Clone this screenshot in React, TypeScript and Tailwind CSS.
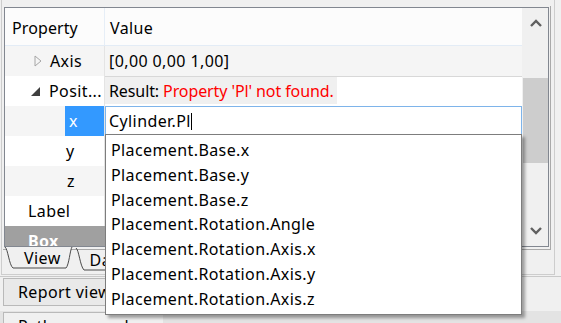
import React from "react";

const rowBg = ["bg-[#f5f5f5]", "bg-white"];

function Chevron({ up }: { up?: boolean }) {
  return (
    <svg width="12" height="8" viewBox="0 0 12 8" className="block">
      <polyline
        points={up ? "1,7 6,2 11,7" : "1,1 6,6 11,1"}
        fill="none"
        stroke="#606060"
        strokeWidth="2.4"
      />
    </svg>
  );
}

function Row({
  bg,
  label,
  indent,
  children,
}: {
  bg: string;
  label: React.ReactNode;
  indent: number;
  children?: React.ReactNode;
}) {
  return (
    <div className={`flex h-[30px] shrink-0 ${bg}`}>
      <div className="flex w-[100px] shrink-0 border-r border-[#e4e4e4]" style={{ paddingLeft: indent }}>
        <div className="flex flex-1 items-center whitespace-nowrap">{label}</div>
      </div>
      <div className="flex min-w-0 flex-1 items-center">{children}</div>
    </div>
  );
}

const completions = [
  "Placement.Base.x",
  "Placement.Base.y",
  "Placement.Base.z",
  "Placement.Rotation.Angle",
  "Placement.Rotation.Axis.x",
  "Placement.Rotation.Axis.y",
  "Placement.Rotation.Axis.z",
];

export default function App() {
  return (
    <div className="relative h-[323px] w-[561px] overflow-hidden bg-[#f0f0f0] font-['Noto_Sans',sans-serif] text-[16px] tracking-[0.4px] text-black">
      {/* property dock */}
      <div className="ml-px h-[275px] w-[554px] border-x border-b border-[#cdcdcd] pl-px pt-[6px]">
        <div className="h-[244px] w-[548px] border-r border-b border-[#a9a9a9] pl-px pt-px">
          <div className="flex h-[240px] w-[545px] border border-[#828790] bg-white">
            {/* table */}
            <div className="flex w-[517px] flex-col overflow-hidden">
              <div className="flex h-[38px] shrink-0 border-b border-[#e3ecf6] bg-[#fcfcfc]">
                <div className="flex w-[100px] items-center border-r border-[#e6eef7] pl-[7px] pt-[3px] tracking-[0.1px]">Property</div>
                <div className="flex items-center pl-[5px] pt-[3px]">Value</div>
              </div>

              <Row
                bg={rowBg[0]}
                indent={29}
                label={
                  <>
                    <svg width="8" height="12" viewBox="0 0 8 12" className="mr-[8px]">
                      <polygon points="1,1 7,6 1,11" fill="none" stroke="#a6a6a6" strokeWidth="1" />
                    </svg>
                    Axis
                  </>
                }
              >
                <span className="pl-[4px]">[0,00 0,00 1,00]</span>
              </Row>

              <Row
                bg={rowBg[1]}
                indent={26}
                label={
                  <>
                    <svg width="10" height="10" viewBox="0 0 10 10" className="mr-[8px] mt-[1px]">
                      <polygon points="9,0 9,9 0,9" fill="#3f3f3f" />
                    </svg>
                    Posit...
                  </>
                }
              >
                <div className="h-full w-full border-t border-[#d8d8d8] pb-[2px]">
                  <div className="flex h-full w-fit items-center whitespace-nowrap bg-[#f0f0f0] pl-[4px] pr-[3px] tracking-[-0.1px]">
                    Result:&nbsp;<span className="text-[#ff0000]">Property 'Pl' not found.</span>
                  </div>
                </div>
              </Row>

              <Row
                bg={rowBg[0]}
                indent={60}
                label={<div className="flex h-full w-full items-center bg-[#3399ff] pl-[4px] text-white">x</div>}
              >
                <div className="flex h-full w-full items-center border border-[#7eb4ea] bg-white pl-[3px]">
                  Cylinder.Pl
                  <span className="inline-block h-[17px] w-px bg-black" />
                </div>
              </Row>

              <Row bg={rowBg[1]} indent={61} label="y" />
              <Row bg={rowBg[0]} indent={62} label="z" />
              <Row bg={rowBg[1]} indent={23} label="Label" />
              <div className="flex h-[30px] shrink-0 items-start bg-[#a0a0a0] pl-[23px] pt-[3px] font-bold text-white">
                Box
              </div>
            </div>

            {/* scrollbar */}
            <div className="flex w-[26px] flex-col bg-[#f0f0f0] pl-px">
              <div className="flex h-[38px] shrink-0 items-center justify-center pb-[8px]">
                <Chevron up />
              </div>
              <div className="mt-[32px] h-[85px] w-[25px] shrink-0 bg-[#cdcdcd]" />
              <div className="flex-1" />
              <div className="flex h-[28px] shrink-0 items-center justify-center pb-[2px]">
                <Chevron />
              </div>
            </div>
          </div>
        </div>

        {/* tabs */}
        <div className="relative -mt-[3px] h-[24px]">
          <svg width="140" height="24" className="absolute left-0 top-0">
            <path d="M2 0 C 5 2, 6 18, 10 21 L 63 21 C 66 18, 67 3, 69 0" fill="#f0f0f0" stroke="#4a4a4a" strokeWidth="1" />
            <path d="M73 1 C 76 3, 77 19, 81 23 L 140 23" fill="none" stroke="#4a4a4a" strokeWidth="1" />
          </svg>
          <div className="relative flex h-[22px] items-center">
            <span className="ml-[21px]">View</span>
            <span className="ml-[29px] mt-[3px]">Data</span>
          </div>
        </div>
      </div>

      {/* report view */}
      <div className="mt-[1px] border-t border-[#c9c9c9] pt-px">
        <div className="ml-[3px] flex h-[28px] w-[140px] items-center border border-[#b9b9b9] bg-[#e9e9e9] pl-[14px]">
          Report view
        </div>
      </div>

      <div className="mt-[5px] h-[20px] bg-[#e3e3e3] pt-px">
        <div className="ml-[3px] h-full w-[160px] border-l border-t border-[#b9b9b9] bg-[#f0f0f0] pl-[14px] pt-[1px]">
          Python console
        </div>
      </div>

      {/* completer popup */}
      <div className="absolute left-[105px] top-[134px] h-[181px] w-[417px] border border-[#7d7d7d] bg-white pl-[5px] pt-[3px] shadow-[3px_3px_3px_rgba(0,0,0,0.35)]">
        {completions.map((c) => (
          <div key={c} className="h-[24.8px] leading-[24.8px]">
            {c}
          </div>
        ))}
      </div>
    </div>
  );
}
